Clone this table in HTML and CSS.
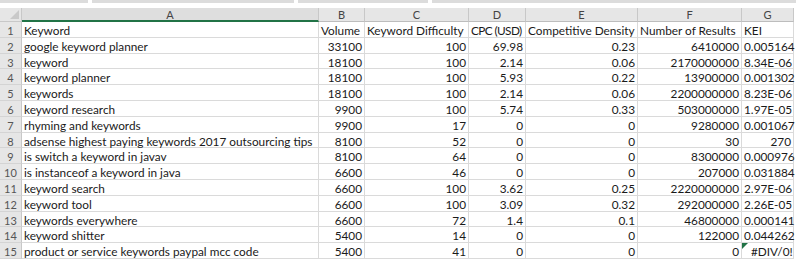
FILE: index.html
```html
<!DOCTYPE html>
<html>
<head>
<meta charset="utf-8">
<link rel="stylesheet" href="styles.css">
</head>
<body>
<div class="topbar"><span class="seg s1"></span><span class="seg s2"></span><span class="seg s3"></span><span class="seg s4"></span></div>
<div class="sheet">
  <div class="corner"><span class="tri"></span></div>
  <div class="ch sel">A</div><div class="ch">B</div><div class="ch">C</div><div class="ch">D</div><div class="ch">E</div><div class="ch">F</div><div class="ch">G</div>

  <div class="rh">1</div><div class="c">Keyword</div><div class="c">Volume</div><div class="c">Keyword Difficulty</div><div class="c tight">CPC (USD)</div><div class="c">Competitive Density</div><div class="c">Number of Results</div><div class="c">KEI</div>
  <div class="rh">2</div><div class="c">google keyword planner</div><div class="c n">33100</div><div class="c n">100</div><div class="c n">69.98</div><div class="c n">0.23</div><div class="c n">6410000</div><div class="c n">0.005164</div>
  <div class="rh">3</div><div class="c">keyword</div><div class="c n">18100</div><div class="c n">100</div><div class="c n">2.14</div><div class="c n">0.06</div><div class="c n">2170000000</div><div class="c n">8.34E-06</div>
  <div class="rh">4</div><div class="c">keyword planner</div><div class="c n">18100</div><div class="c n">100</div><div class="c n">5.93</div><div class="c n">0.22</div><div class="c n">13900000</div><div class="c n">0.001302</div>
  <div class="rh">5</div><div class="c">keywords</div><div class="c n">18100</div><div class="c n">100</div><div class="c n">2.14</div><div class="c n">0.06</div><div class="c n">2200000000</div><div class="c n">8.23E-06</div>
  <div class="rh">6</div><div class="c">keyword research</div><div class="c n">9900</div><div class="c n">100</div><div class="c n">5.74</div><div class="c n">0.33</div><div class="c n">503000000</div><div class="c n">1.97E-05</div>
  <div class="rh">7</div><div class="c">rhyming and keywords</div><div class="c n">9900</div><div class="c n">17</div><div class="c n">0</div><div class="c n">0</div><div class="c n">9280000</div><div class="c n">0.001067</div>
  <div class="rh">8</div><div class="c">adsense highest paying keywords 2017 outsourcing tips</div><div class="c n">8100</div><div class="c n">52</div><div class="c n">0</div><div class="c n">0</div><div class="c n">30</div><div class="c n">270</div>
  <div class="rh">9</div><div class="c">is switch a keyword in javav</div><div class="c n">8100</div><div class="c n">64</div><div class="c n">0</div><div class="c n">0</div><div class="c n">8300000</div><div class="c n">0.000976</div>
  <div class="rh">10</div><div class="c">is instanceof a keyword in java</div><div class="c n">6600</div><div class="c n">46</div><div class="c n">0</div><div class="c n">0</div><div class="c n">207000</div><div class="c n">0.031884</div>
  <div class="rh">11</div><div class="c">keyword search</div><div class="c n">6600</div><div class="c n">100</div><div class="c n">3.62</div><div class="c n">0.25</div><div class="c n">2220000000</div><div class="c n">2.97E-06</div>
  <div class="rh">12</div><div class="c">keyword tool</div><div class="c n">6600</div><div class="c n">100</div><div class="c n">3.09</div><div class="c n">0.32</div><div class="c n">292000000</div><div class="c n">2.26E-05</div>
  <div class="rh">13</div><div class="c">keywords everywhere</div><div class="c n">6600</div><div class="c n">72</div><div class="c n">1.4</div><div class="c n">0.1</div><div class="c n">46800000</div><div class="c n">0.000141</div>
  <div class="rh">14</div><div class="c">keyword shitter</div><div class="c n">5400</div><div class="c n">14</div><div class="c n">0</div><div class="c n">0</div><div class="c n">122000</div><div class="c n">0.044262</div>
  <div class="rh">15</div><div class="c">product or service keywords paypal mcc code</div><div class="c n">5400</div><div class="c n">41</div><div class="c n">0</div><div class="c n">0</div><div class="c n">0</div><div class="c err"><span class="flag"></span>#DIV/0!</div>
</div>
</body>
</html>
```

FILE: styles.css
```css
* { box-sizing: border-box; }
html, body { margin: 0; padding: 0; background: #fff; overflow: hidden; }
body {
  width: 796px; height: 263px;
  font-family: Lato, "Liberation Sans", sans-serif;
  font-size: 11.8px;
  color: #1a1a1a;
}
.topbar { height: 8px; display: flex; align-items: flex-start; gap: 4px; }
.seg { height: 3px; background: #dcdcdc; display: block; }
.s1 { width: 88px; }
.s2 { width: 202px; }
.s3 { width: 130px; }
.s4 { flex: 1; }
.sheet {
  display: grid;
  grid-template-columns: 22px 297px 46px 104px 57px 112px 104px 52px;
  grid-template-rows: 14px repeat(15, 15.8px);
  width: 794px;
}
.corner { background: #e6e6e6; border-right: 1px solid #c8c8c8; border-bottom: 1px solid #c8c8c8; position: relative; overflow: hidden; }
.tri {
  position: absolute; right: 2px; bottom: 2px; width: 0; height: 0;
  border-left: 9px solid transparent; border-bottom: 9px solid #c9c9c9;
}
.ch {
  background: #e6e6e6; color: #444; font-size: 11px; text-align: center; line-height: 14px;
  border-right: 1px solid #c8c8c8; border-bottom: 1px solid #bdbdbd;
}
.ch.sel { background: #dedede; border-bottom: 2px solid #217346; line-height: 13px; }
.rh {
  background: #e6e6e6; color: #555; font-size: 11px; text-align: center; line-height: 15px; padding-top: 1px;
  border-right: 1px solid #c8c8c8; border-bottom: 1px solid #d4d4d4;
}
.c {
  border-right: 1px solid #dadada; border-bottom: 1px solid #dadada;
  padding: 2px 2px 0; line-height: 14px; white-space: nowrap; overflow: visible;
}
.tight { letter-spacing: -0.6px; }
.n { text-align: right; }
.err { text-align: left; padding-left: 9px; position: relative; }
.flag {
  position: absolute; left: 0; top: 0; width: 0; height: 0;
  border-top: 6px solid #217346; border-right: 6px solid transparent;
}
```
